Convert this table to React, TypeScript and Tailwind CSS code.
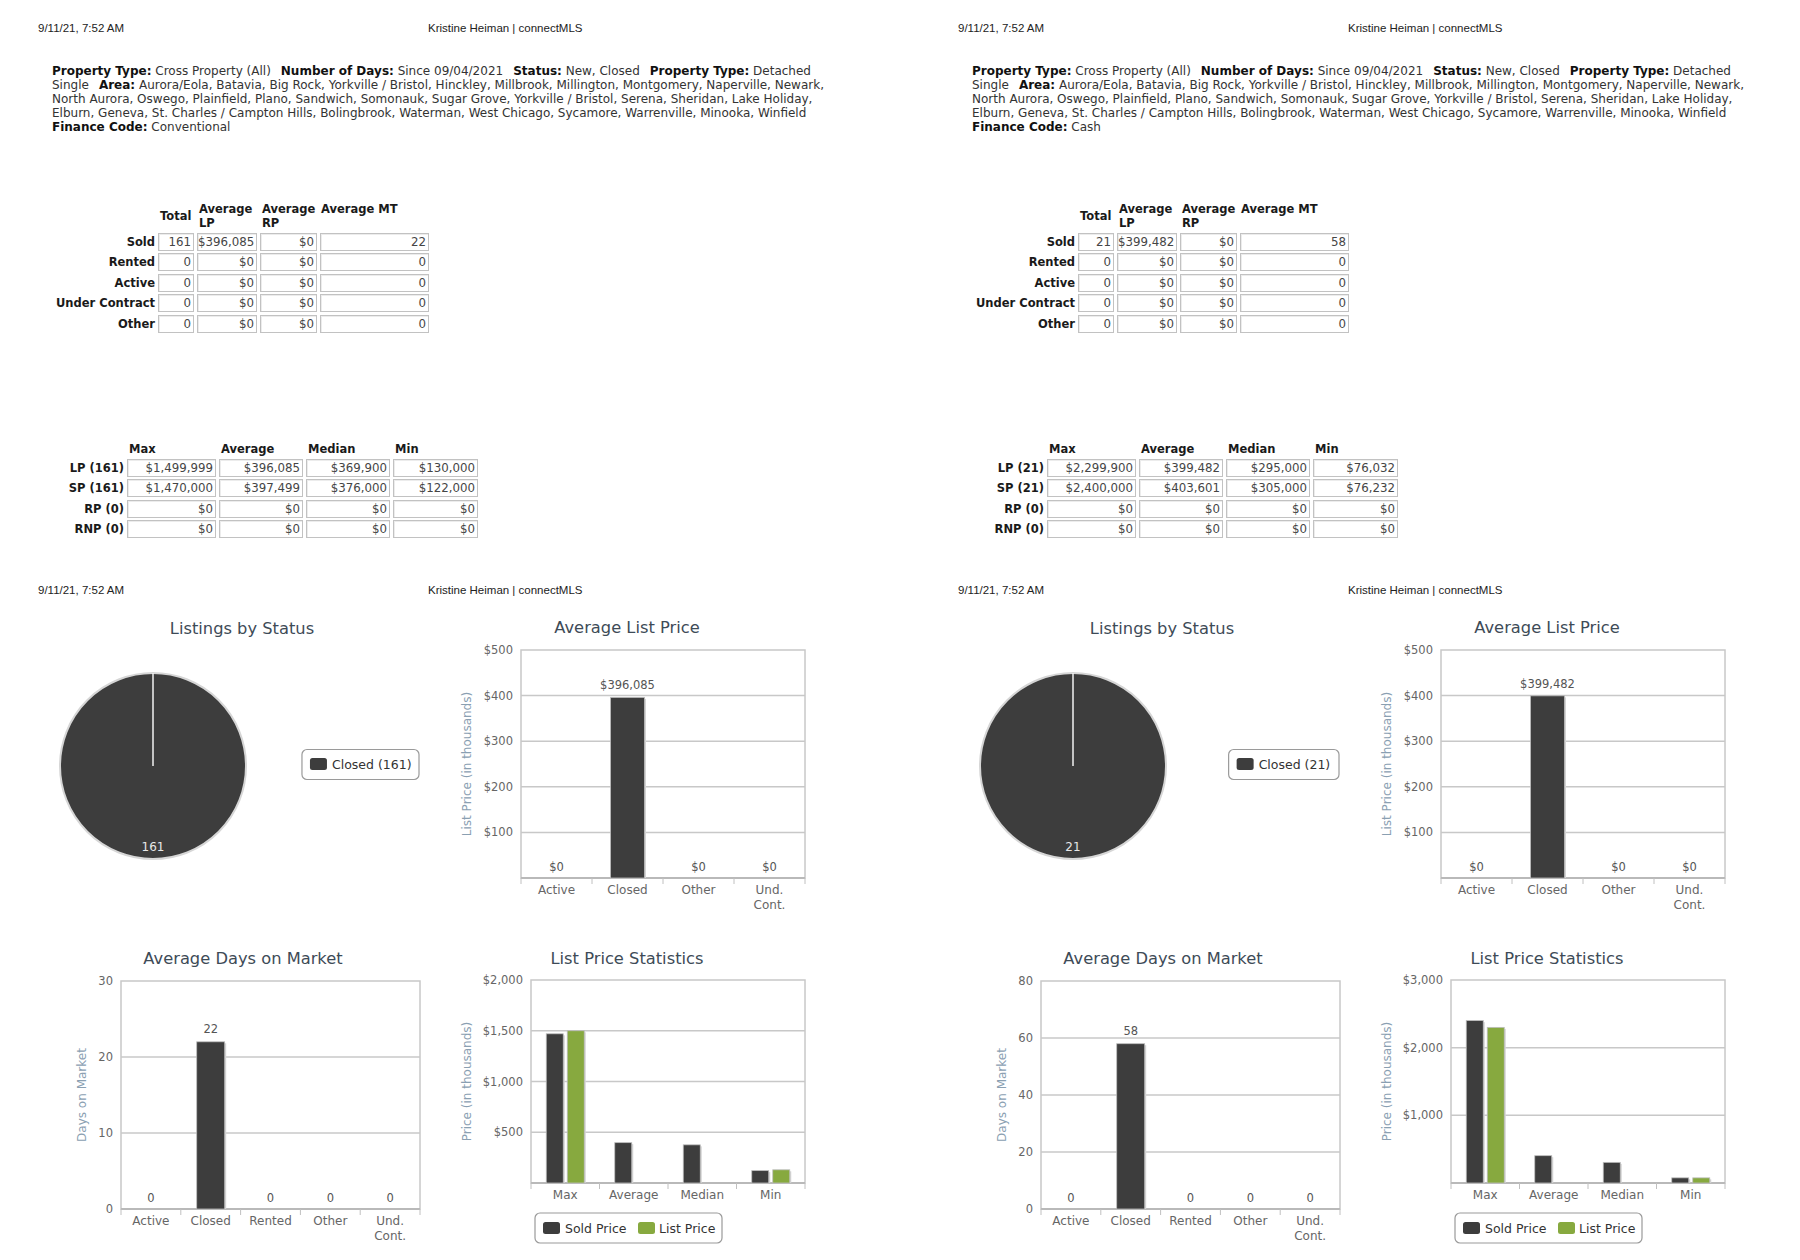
import React from "react";

type Tick = { v: number; label?: string };

type Report = {
  finance: string;
  sold: [string, string, string, string];
  stats: { label: string; values: string[] }[];
  count: number;
  avgList: number;
  avgListLabel: string;
  dom: number;
  domTicks: Tick[];
  domMax: number;
  priceMax: number;
  priceTicks: Tick[];
  soldPrices: number[];
  listPrices: number[];
};

const reports: Report[] = [
  {
    finance: "Conventional",
    sold: ["161", "$396,085", "$0", "22"],
    stats: [
      { label: "LP (161)", values: ["$1,499,999", "$396,085", "$369,900", "$130,000"] },
      { label: "SP (161)", values: ["$1,470,000", "$397,499", "$376,000", "$122,000"] },
      { label: "RP (0)", values: ["$0", "$0", "$0", "$0"] },
      { label: "RNP (0)", values: ["$0", "$0", "$0", "$0"] },
    ],
    count: 161,
    avgList: 396.085,
    avgListLabel: "$396,085",
    dom: 22,
    domMax: 30,
    domTicks: [{ v: 30, label: "30" }, { v: 20, label: "20" }, { v: 10, label: "10" }, { v: 0, label: "0" }],
    priceMax: 2000,
    priceTicks: [
      { v: 2000, label: "$2,000" },
      { v: 1500, label: "$1,500" },
      { v: 1000, label: "$1,000" },
      { v: 500, label: "$500" },
    ],
    soldPrices: [1470, 397.5, 376, 122],
    listPrices: [1500, 0, 0, 130],
  },
  {
    finance: "Cash",
    sold: ["21", "$399,482", "$0", "58"],
    stats: [
      { label: "LP (21)", values: ["$2,299,900", "$399,482", "$295,000", "$76,032"] },
      { label: "SP (21)", values: ["$2,400,000", "$403,601", "$305,000", "$76,232"] },
      { label: "RP (0)", values: ["$0", "$0", "$0", "$0"] },
      { label: "RNP (0)", values: ["$0", "$0", "$0", "$0"] },
    ],
    count: 21,
    avgList: 399.482,
    avgListLabel: "$399,482",
    dom: 58,
    domMax: 80,
    domTicks: [
      { v: 80, label: "80" },
      { v: 60, label: "60" },
      { v: 40, label: "40" },
      { v: 20, label: "20" },
      { v: 0, label: "0" },
    ],
    priceMax: 3000,
    priceTicks: [
      { v: 3000, label: "$3,000" },
      { v: 2000, label: "$2,000" },
      { v: 1000, label: "$1,000" },
    ],
    soldPrices: [2400, 403.6, 305, 76.2],
    listPrices: [2299.9, 0, 0, 76],
  },
];

const DARK = "#3d3d3d";
const GREEN = "#87a93f";

const PageHeader = () => (
  <div className="flex pl-[38px] text-[11.5px] leading-[16px] text-[#222]">
    <span className="w-[390px]">9/11/21, 7:52 AM</span>
    <span>Kristine Heiman | connectMLS</span>
  </div>
);

const Filters = ({ finance }: { finance: string }) => (
  <div className="pl-[52px] font-['DejaVu_Sans',Verdana,sans-serif] text-[12px] leading-[14px] text-[#333] whitespace-nowrap">
    <div>
      <b className="text-[#111]">Property Type:</b> Cross Property (All)
      <b className="ml-[10px] text-[#111]">Number of Days:</b> Since 09/04/2021
      <b className="ml-[10px] text-[#111]">Status:</b> New, Closed
      <b className="ml-[10px] text-[#111]">Property Type:</b> Detached
    </div>
    <div>
      Single
      <b className="ml-[10px] text-[#111]">Area:</b> Aurora/Eola, Batavia, Big Rock, Yorkville / Bristol, Hinckley,
      Millbrook, Millington, Montgomery, Naperville, Newark,
    </div>
    <div>
      North Aurora, Oswego, Plainfield, Plano, Sandwich, Somonauk, Sugar Grove, Yorkville / Bristol, Serena,
      Sheridan, Lake Holiday,
    </div>
    <div>
      Elburn, Geneva, St. Charles / Campton Hills, Bolingbrook, Waterman, West Chicago, Sycamore, Warrenville,
      Minooka, Winfield
    </div>
    <div>
      <b className="text-[#111]">Finance Code:</b> {finance}
    </div>
  </div>
);

const Cell = ({ children }: { children: React.ReactNode }) => (
  <div className="h-[18px] border border-[#c2c2c2] shadow-[inset_1px_1px_0_#ececec] pr-[2px] text-right leading-[16px] text-[11.8px] text-[#454545] whitespace-nowrap">
    {children}
  </div>
);

const RowLabel = ({ children }: { children: React.ReactNode }) => (
  <div className="text-right font-bold text-[11.5px] leading-[18px] text-[#1a1a1a] whitespace-nowrap">
    {children}
  </div>
);

const SummaryTable = ({ sold }: { sold: string[] }) => {
  const rows: [string, string[]][] = [
    ["Sold", sold],
    ["Rented", ["0", "$0", "$0", "0"]],
    ["Active", ["0", "$0", "$0", "0"]],
    ["Under Contract", ["0", "$0", "$0", "0"]],
    ["Other", ["0", "$0", "$0", "0"]],
  ];
  return (
    <div className="ml-[15px] grid w-max grid-cols-[140px_36px_60px_57px_109px] gap-x-[3px] gap-y-[2.5px] font-['DejaVu_Sans',Verdana,sans-serif]">
      <div />
      <div className="self-center pl-[2px] font-bold text-[11.5px] leading-[14px] text-[#1a1a1a]">Total</div>
      <div className="pl-[2px] font-bold text-[11.5px] leading-[14px] text-[#1a1a1a]">
        Average
        <br />
        LP
      </div>
      <div className="pl-[2px] font-bold text-[11.5px] leading-[14px] text-[#1a1a1a]">
        Average
        <br />
        RP
      </div>
      <div className="self-start pl-[1px] font-bold text-[11.5px] leading-[14px] text-[#1a1a1a] whitespace-nowrap">
        Average MT
      </div>
      {rows.map(([label, vals]) => (
        <React.Fragment key={label}>
          <RowLabel>{label}</RowLabel>
          {vals.map((v, i) => (
            <Cell key={i}>{v}</Cell>
          ))}
        </React.Fragment>
      ))}
    </div>
  );
};

const StatsTable = ({ stats }: { stats: Report["stats"] }) => (
  <div className="ml-[15px] grid w-max grid-cols-[109px_89px_84px_84px_85px] gap-x-[3px] gap-y-[2.5px] font-['DejaVu_Sans',Verdana,sans-serif]">
    <div />
    {["Max", "Average", "Median", "Min"].map((h) => (
      <div key={h} className="pl-[2px] font-bold text-[11.5px] leading-[14px] text-[#1a1a1a]">
        {h}
      </div>
    ))}
    {stats.map((row) => (
      <React.Fragment key={row.label}>
        <RowLabel>{row.label}</RowLabel>
        {row.values.map((v, i) => (
          <Cell key={i}>{v}</Cell>
        ))}
      </React.Fragment>
    ))}
  </div>
);

/* ---------- charts (svg, viewBox in column coordinates) ---------- */

const Title = ({ x, y, children }: { x: number; y: number; children: string }) => (
  <text x={x} y={y + 6} textAnchor="middle" fontSize={16.3} fill="#3e4b57">
    {children}
  </text>
);

type FrameProps = {
  x0: number;
  x1: number;
  y0: number;
  y1: number;
  max: number;
  ticks: Tick[];
  yTitle: string;
  yTitleX: number;
  cats: string[][];
};

const Frame = ({ x0, x1, y0, y1, max, ticks, yTitle, yTitleX, cats }: FrameProps) => {
  const h = y1 - y0;
  const yOf = (v: number) => y1 - (v / max) * h;
  const cw = (x1 - x0) / cats.length;
  const yc = (y0 + y1) / 2;
  return (
    <g>
      <rect x={x0} y={y0} width={x1 - x0} height={h} fill="#fff" stroke="#c8c8c8" strokeWidth={1.5} />
      {ticks
        .filter((t) => t.v > 0 && t.v < max)
        .map((t) => (
          <line key={"g" + t.v} x1={x0} x2={x1} y1={yOf(t.v)} y2={yOf(t.v)} stroke="#c8c8c8" strokeWidth={1.5} />
        ))}
      {ticks.map((t) => (
        <text key={"l" + t.v} x={x0 - 8} y={yOf(t.v) + 4} textAnchor="end" fontSize={11.5} fill="#666">
          {t.label}
        </text>
      ))}
      <line x1={x0} x2={x1} y1={y1} y2={y1} stroke="#b9b9b9" strokeWidth={2} />
      {Array.from({ length: cats.length + 1 }, (_, i) => (
        <line key={"t" + i} x1={x0 + i * cw} x2={x0 + i * cw} y1={y1} y2={y1 + 6} stroke="#c0c0c0" strokeWidth={1} />
      ))}
      {cats.map((c, i) => (
        <text key={"c" + i} y={y1 + 16} textAnchor="middle" fontSize={12} fill="#666">
          {c.map((line, j) => (
            <tspan key={j} x={x0 + cw * (i + 0.5)} dy={j ? 14.5 : 0}>
              {line}
            </tspan>
          ))}
        </text>
      ))}
      <text
        transform={`rotate(-90 ${yTitleX} ${yc})`}
        x={yTitleX}
        y={yc + 4}
        textAnchor="middle"
        fontSize={12}
        fill="#8aa0b2"
      >
        {yTitle}
      </text>
    </g>
  );
};

const Bar = ({ x, w, top, bottom, fill }: { x: number; w: number; top: number; bottom: number; fill: string }) => (
  <g>
    <rect x={x + 1.5} y={top + 1.5} width={w} height={bottom - top - 1.5} fill="#d4d4d4" />
    <rect x={x} y={top} width={w} height={bottom - top} fill={fill} stroke="#bdbdbd" strokeWidth={0.8} />
  </g>
);

const PieChart = ({ count }: { count: number }) => {
  const label = `Closed (${count})`;
  const textW = label.length * 6.67;
  const boxW = textW + 37;
  const boxX = 419 - boxW;
  return (
    <svg width={440} height={330} viewBox="0 600 440 330" className="block">
      <Title x={242} y={628}>Listings by Status</Title>
      <circle cx={153} cy={766} r={93} fill={DARK} stroke="#d6d6d6" strokeWidth={2} />
      <line x1={153} x2={153} y1={673} y2={766} stroke="#f2f2f2" strokeWidth={1.5} />
      <text x={153} y={851} textAnchor="middle" fontSize={12} fill="#e8e8e8">
        {count}
      </text>
      <rect x={boxX} y={749.5} width={boxW} height={30} rx={5} fill="#fff" stroke="#9a9a9a" strokeWidth={1.2} />
      <rect x={boxX + 8} y={758} width={17} height={12} rx={2.5} fill={DARK} />
      <text x={boxX + 30} y={769} fontSize={12.5} fill="#333">
        {label}
      </text>
    </svg>
  );
};

const AvgListChart = ({ r }: { r: Report }) => {
  const x0 = 521,
    x1 = 805,
    y0 = 650,
    y1 = 878,
    max = 500;
  const cw = (x1 - x0) / 4;
  const values = [0, r.avgList, 0, 0];
  const labels = ["$0", r.avgListLabel, "$0", "$0"];
  return (
    <svg width={440} height={330} viewBox="440 600 440 330" className="block">
      <Title x={627} y={627}>Average List Price</Title>
      <Frame
        x0={x0}
        x1={x1}
        y0={y0}
        y1={y1}
        max={max}
        ticks={[
          { v: 500, label: "$500" },
          { v: 400, label: "$400" },
          { v: 300, label: "$300" },
          { v: 200, label: "$200" },
          { v: 100, label: "$100" },
        ]}
        yTitle="List Price (in thousands)"
        yTitleX={467}
        cats={[["Active"], ["Closed"], ["Other"], ["Und.", "Cont."]]}
      />
      {values.map((v, i) => {
        const c = x0 + cw * (i + 0.5);
        const top = y1 - (v / max) * (y1 - y0);
        return (
          <g key={i}>
            {v > 0 && <Bar x={c - 17} w={34} top={top} bottom={y1} fill={DARK} />}
            <text x={c} y={v > 0 ? top - 8 : y1 - 7} textAnchor="middle" fontSize={11.5} fill="#555">
              {labels[i]}
            </text>
          </g>
        );
      })}
    </svg>
  );
};

const DomChart = ({ r }: { r: Report }) => {
  const x0 = 121,
    x1 = 420,
    y0 = 981,
    y1 = 1209;
  const cw = (x1 - x0) / 5;
  const values = [0, r.dom, 0, 0, 0];
  return (
    <svg width={440} height={330} viewBox="0 930 440 330" className="block">
      <Title x={243} y={958}>Average Days on Market</Title>
      <Frame
        x0={x0}
        x1={x1}
        y0={y0}
        y1={y1}
        max={r.domMax}
        ticks={r.domTicks}
        yTitle="Days on Market"
        yTitleX={82}
        cats={[["Active"], ["Closed"], ["Rented"], ["Other"], ["Und.", "Cont."]]}
      />
      {values.map((v, i) => {
        const c = x0 + cw * (i + 0.5);
        const top = y1 - (v / r.domMax) * (y1 - y0);
        return (
          <g key={i}>
            {v > 0 && <Bar x={c - 14} w={28} top={top} bottom={y1} fill={DARK} />}
            <text x={c} y={v > 0 ? top - 9 : y1 - 7} textAnchor="middle" fontSize={11.5} fill="#555">
              {v}
            </text>
          </g>
        );
      })}
    </svg>
  );
};

const PriceStatsChart = ({ r }: { r: Report }) => {
  const x0 = 531,
    x1 = 805,
    y0 = 980,
    y1 = 1183;
  const cw = (x1 - x0) / 4;
  const yOf = (v: number) => y1 - (v / r.priceMax) * (y1 - y0);
  return (
    <svg width={440} height={330} viewBox="440 930 440 330" className="block">
      <Title x={627} y={958}>List Price Statistics</Title>
      <Frame
        x0={x0}
        x1={x1}
        y0={y0}
        y1={y1}
        max={r.priceMax}
        ticks={r.priceTicks}
        yTitle="Price (in thousands)"
        yTitleX={467}
        cats={[["Max"], ["Average"], ["Median"], ["Min"]]}
      />
      {r.soldPrices.map((s, i) => {
        const c = x0 + cw * (i + 0.5);
        const l = r.listPrices[i];
        return (
          <g key={i}>
            <Bar x={c - 19} w={17} top={yOf(s)} bottom={y1} fill={DARK} />
            {l > 0 && <Bar x={c + 2} w={17} top={yOf(l)} bottom={y1} fill={GREEN} />}
          </g>
        );
      })}
      <rect x={535} y={1213} width={187} height={30} rx={5} fill="#fff" stroke="#9a9a9a" strokeWidth={1.2} />
      <rect x={543} y={1222} width={17} height={12} rx={2.5} fill={DARK} />
      <text x={565} y={1232.5} fontSize={12.5} fill="#333">
        Sold Price
      </text>
      <rect x={638} y={1222} width={17} height={12} rx={2.5} fill={GREEN} />
      <text x={659} y={1232.5} fontSize={12.5} fill="#333">
        List Price
      </text>
    </svg>
  );
};

const ReportColumn = ({ r, wide }: { r: Report; wide: boolean }) => (
  <div className={wide ? "w-[920px] shrink-0" : "w-[880px] shrink-0"}>
    <div className="pt-[20px]">
      <PageHeader />
    </div>
    <div className="mt-[28px]">
      <Filters finance={r.finance} />
    </div>
    <div className="mt-[68px]">
      <SummaryTable sold={r.sold} />
    </div>
    <div className="mt-[109.5px]">
      <StatsTable stats={r.stats} />
    </div>
    <div className="mt-[44px]">
      <PageHeader />
    </div>
    <div className="mt-[2px] grid grid-cols-[440px_440px] font-['DejaVu_Sans',Verdana,sans-serif]">
      <PieChart count={r.count} />
      <AvgListChart r={r} />
      <DomChart r={r} />
      <PriceStatsChart r={r} />
    </div>
  </div>
);

export default function App() {
  return (
    <div className="flex h-[1260px] w-[1800px] overflow-hidden bg-white font-['Liberation_Sans',Arial,sans-serif]">
      <ReportColumn r={reports[0]} wide />
      <ReportColumn r={reports[1]} wide={false} />
    </div>
  );
}
